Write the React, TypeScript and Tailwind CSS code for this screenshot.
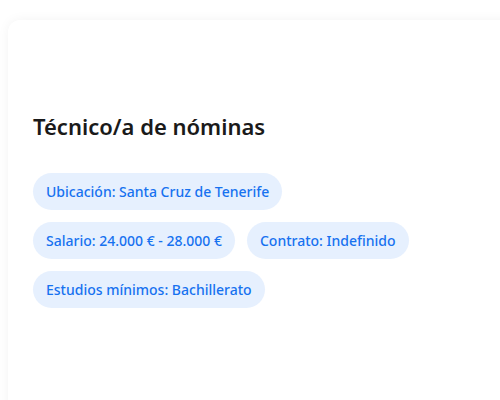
import React from 'react';

const chips = [
  ['Ubicación: Santa Cruz de Tenerife'],
  ['Salario: 24.000 € - 28.000 €', 'Contrato: Indefinido'],
  ['Estudios mínimos: Bachillerato'],
];

export default function App() {
  return (
    <div
      className="w-[500px] h-[400px] overflow-hidden bg-white pl-2 pt-5"
      style={{ fontFamily: '"Noto Sans", "Open Sans", sans-serif' }}
    >
      <div className="w-[520px] h-[420px] rounded-xl bg-white shadow-[0_0_12px_rgba(0,0,0,0.05)] px-[25px] pt-[92px]">
        <h2 className="text-[22px] leading-7 font-semibold text-[#1a1a1a]">Técnico/a de nóminas</h2>
        <div className="mt-[33px] flex flex-col gap-3">
          {chips.map((row, i) => (
            <div key={i} className="flex gap-3">
              {row.map((c) => (
                <span
                  key={c}
                  className="h-[37px] flex items-center rounded-full bg-[#e6f0fe] px-[13px] text-[14px] font-medium text-[#1772f0]"
                >
                  {c}
                </span>
              ))}
            </div>
          ))}
        </div>
      </div>
    </div>
  );
}
